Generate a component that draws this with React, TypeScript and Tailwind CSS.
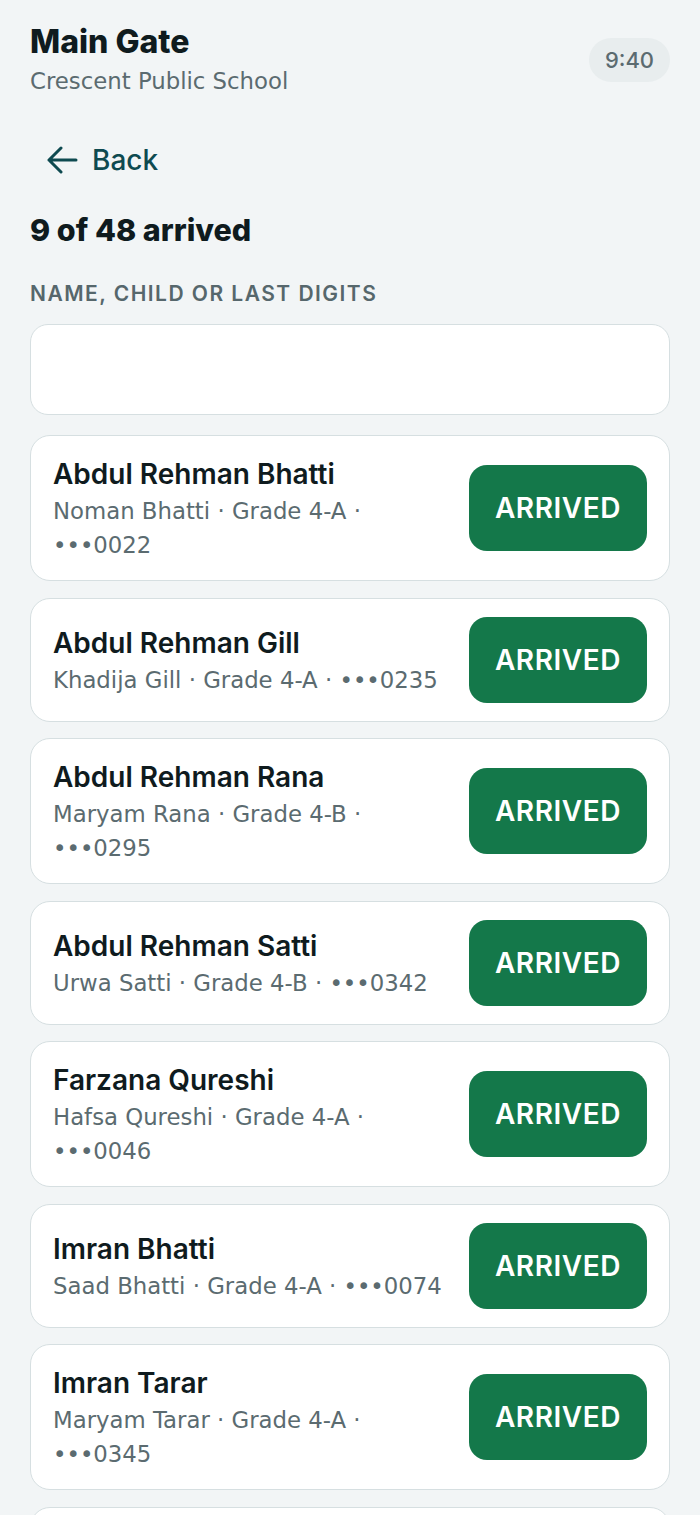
import React, { useState } from "react";

type Guardian = {
  id: number;
  name: string;
  child: string;
  grade: string;
  digits: string;
};

const guardians: Guardian[] = [
  { id: 1, name: "Abdul Rehman Bhatti", child: "Noman Bhatti", grade: "Grade 4-A", digits: "0022" },
  { id: 2, name: "Abdul Rehman Gill", child: "Khadija Gill", grade: "Grade 4-A", digits: "0235" },
  { id: 3, name: "Abdul Rehman Rana", child: "Maryam Rana", grade: "Grade 4-B", digits: "0295" },
  { id: 4, name: "Abdul Rehman Satti", child: "Urwa Satti", grade: "Grade 4-B", digits: "0342" },
  { id: 5, name: "Farzana Qureshi", child: "Hafsa Qureshi", grade: "Grade 4-A", digits: "0046" },
  { id: 6, name: "Imran Bhatti", child: "Saad Bhatti", grade: "Grade 4-A", digits: "0074" },
  { id: 7, name: "Imran Tarar", child: "Maryam Tarar", grade: "Grade 4-A", digits: "0345" },
  { id: 8, name: "Kashif Mehmood", child: "Ayesha Mehmood", grade: "Grade 4-B", digits: "0118" },
];

const heading = { fontFamily: 'Inter, "Noto Sans", sans-serif' };
const body = { fontFamily: '"DejaVu Sans", "Noto Sans", sans-serif' };

function BackArrow() {
  return (
    <svg width="32" height="28" viewBox="0 0 32 28" fill="none" aria-hidden="true">
      <path
        d="M30 14H3M15 2 3 14l12 12"
        stroke="currentColor"
        strokeWidth="3"
        strokeLinecap="round"
        strokeLinejoin="round"
      />
    </svg>
  );
}

export default function App() {
  const [query, setQuery] = useState("");

  const list = guardians.filter((g) => {
    const q = query.trim().toLowerCase();
    if (!q) return true;
    return (
      g.name.toLowerCase().includes(q) ||
      g.child.toLowerCase().includes(q) ||
      g.digits.includes(q)
    );
  });

  return (
    <div className="min-h-screen bg-[#f2f5f6] text-[#0f1b1e]" style={heading}>
      <div className="px-[30px] pt-[22px] pb-10">
        {/* Header */}
        <header className="flex items-center justify-between">
          <div>
            <h1 className="text-[32px] leading-[40px] font-extrabold">Main Gate</h1>
            <p className="mt-[2px] text-[22.8px] leading-[34px] text-[#5b6b70]" style={body}>
              Crescent Public School
            </p>
          </div>
          <div className="flex h-[44px] w-[81px] items-center justify-center rounded-full bg-[#e8edee] text-[22px] font-medium text-[#5b6b70]">
            9:40
          </div>
        </header>

        {/* Back */}
        <button className="mt-[38px] ml-4 flex h-12 items-center gap-[14px] text-[#0e4a50]">
          <BackArrow />
          <span className="text-[28px] font-medium">Back</span>
        </button>

        <h2 className="mt-[28px] text-[30.5px] leading-[36px] font-extrabold">9 of 48 arrived</h2>

        <label
          htmlFor="search"
          className="mt-[33px] block text-[21px] leading-[26px] font-semibold uppercase tracking-[0.07em] text-[#56676c]"
        >
          Name, child or last digits
        </label>
        <input
          id="search"
          value={query}
          onChange={(e) => setQuery(e.target.value)}
          className="mt-[17px] block h-[91px] w-full rounded-[18px] border border-[#d6dfe1] bg-white px-5 text-[24px] outline-none"
        />

        {/* Guardians */}
        <ul className="mt-5 flex flex-col gap-[16.5px]">
          {list.map((g) => (
            <li
              key={g.id}
              className="flex items-center justify-between gap-4 rounded-[20px] border border-[#d6dfe1] bg-white py-[18px] pr-[22px] pl-[22px]"
            >
              <div className="min-w-0 flex-1">
                <div className="text-[28px] leading-[40px] font-semibold">{g.name}</div>
                <div className="text-[22.8px] leading-[34px] text-[#5b6b70]" style={body}>
                  {g.child} · {g.grade} · •••{g.digits}
                </div>
              </div>
              <button className="flex h-[86px] shrink-0 items-center rounded-[18px] bg-[#14784a] px-[26px] text-[28px] font-semibold tracking-[0.02em] text-white">
                ARRIVED
              </button>
            </li>
          ))}
        </ul>
      </div>
    </div>
  );
}
